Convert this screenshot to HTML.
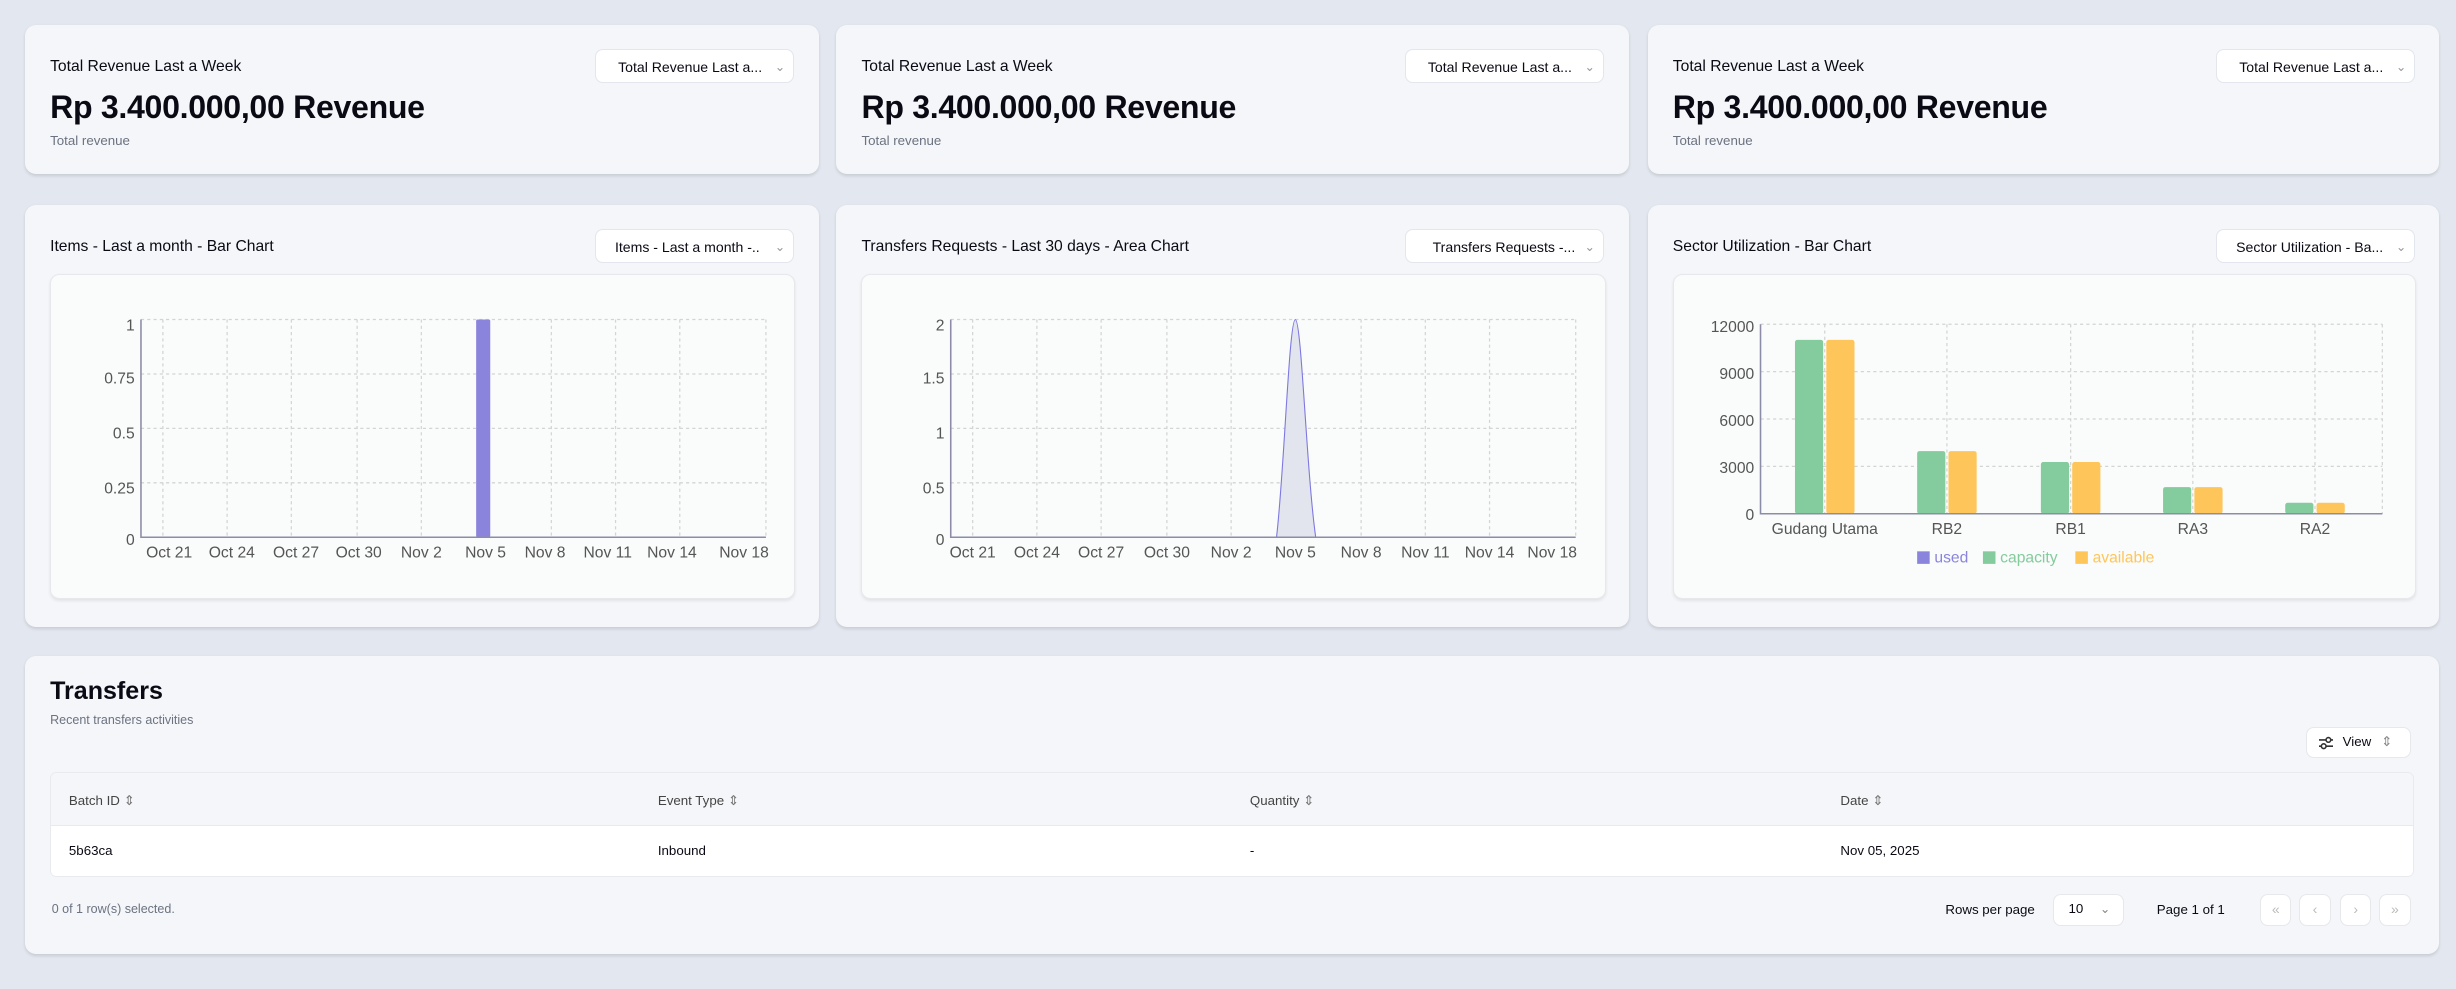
<!DOCTYPE html>
<html><head><meta charset="utf-8"><style>
html,body{margin:0;padding:0;background:#e3e7ef;}
body{width:1568px;height:631px;zoom:1.5663;overflow:hidden;font-family:"Liberation Sans",sans-serif;color:#0a0a14;position:relative}
.card{position:absolute;background:#f5f6f9;border-radius:7px;box-shadow:0 1px 2px rgba(0,0,0,.12)}
.t{position:absolute;font-size:10px;}
.big{position:absolute;font-size:20.5px;font-weight:bold;letter-spacing:-0.2px}
.sub{position:absolute;font-size:8.5px;color:#6b7280}
.sel{position:absolute;background:#fff;border:1px solid #e3e6ec;border-radius:5px;font-size:9px;height:22px;line-height:22px;box-sizing:border-box;padding-left:14px;white-space:nowrap}
.sel .c{position:absolute;right:5px;top:0;color:#999;font-size:8px}
.chart{position:absolute;background:#fafbfb;border:1px solid #e6e8ec;border-radius:6px;box-shadow:0 1px 2px rgba(0,0,0,.08)}
svg text{font-family:"Liberation Sans",sans-serif}
.sm{position:absolute;font-size:8.5px}
.btn{position:absolute;background:#fff;border:1px solid #e6e8ec;border-radius:5px;box-sizing:border-box}
</style></head><body>

<div class="card" style="left:16px;top:16px;width:507px;height:95px"></div>
<div class="card" style="left:534px;top:16px;width:506px;height:95px"></div>
<div class="card" style="left:1052px;top:16px;width:505px;height:95px"></div>

<div class="t" style="left:32px;top:37px">Total Revenue Last a Week</div>
<div class="big" style="left:32px;top:57px">Rp 3.400.000,00 Revenue</div>
<div class="sub" style="left:32px;top:85px">Total revenue</div>
<div class="sel" style="left:380px;top:31px;width:127px">Total Revenue Last a...<span class="c">⌄</span></div>

<div class="t" style="left:550px;top:37px">Total Revenue Last a Week</div>
<div class="big" style="left:550px;top:57px">Rp 3.400.000,00 Revenue</div>
<div class="sub" style="left:550px;top:85px">Total revenue</div>
<div class="sel" style="left:897px;top:31px;width:127px">Total Revenue Last a...<span class="c">⌄</span></div>

<div class="t" style="left:1068px;top:37px">Total Revenue Last a Week</div>
<div class="big" style="left:1068px;top:57px">Rp 3.400.000,00 Revenue</div>
<div class="sub" style="left:1068px;top:85px">Total revenue</div>
<div class="sel" style="left:1415px;top:31px;width:127px">Total Revenue Last a...<span class="c">⌄</span></div>

<div class="card" style="left:16px;top:131px;width:507px;height:269px"></div>
<div class="card" style="left:534px;top:131px;width:506px;height:269px"></div>
<div class="card" style="left:1052px;top:131px;width:505px;height:269px"></div>

<div class="t" style="left:32px;top:152px">Items - Last a month - Bar Chart</div>
<div class="sel" style="left:380px;top:146px;width:127px;padding-left:12px">Items - Last a month -..<span class="c">⌄</span></div>
<div class="t" style="left:550px;top:152px">Transfers Requests - Last 30 days - Area Chart</div>
<div class="sel" style="left:897px;top:146px;width:127px;padding-left:17px">Transfers Requests -...<span class="c">⌄</span></div>
<div class="t" style="left:1068px;top:152px">Sector Utilization - Bar Chart</div>
<div class="sel" style="left:1415px;top:146px;width:127px;padding-left:12px">Sector Utilization - Ba...<span class="c">⌄</span></div>

<div class="chart" style="left:32px;top:175px;width:474px;height:206px"></div>
<div class="chart" style="left:550px;top:175px;width:474px;height:206px"></div>
<div class="chart" style="left:1068px;top:175px;width:473px;height:206px"></div>

<svg width="1568" height="631" style="position:absolute;left:0;top:0" font-size="10" fill="#555">
<g stroke="#d4d4d4" stroke-dasharray="2,2" stroke-width="0.8" fill="none">
<path d="M90 204H489M90 238.75H489M90 273.5H489M90 308.25H489"/>
<path d="M104 204V343M145 204V343M186 204V343M228 204V343M269 204V343M310 204V343M352 204V343M393 204V343M434 204V343M489 204V343"/>
</g>
<rect x="304" y="204" width="9" height="139" rx="1" fill="#8a84dc"/>
<path d="M90 204V343H489" stroke="#8c8ca8" stroke-width="1" fill="none"/>
<g text-anchor="end" fill="#555"><text x="86" y="211">1</text><text x="86" y="245">0.75</text><text x="86" y="280">0.5</text><text x="86" y="315">0.25</text><text x="86" y="348">0</text></g>
<g text-anchor="middle"><text x="108" y="356">Oct 21</text><text x="148" y="356">Oct 24</text><text x="189" y="356">Oct 27</text><text x="229" y="356">Oct 30</text><text x="269" y="356">Nov 2</text><text x="310" y="356">Nov 5</text><text x="348" y="356">Nov 8</text><text x="388" y="356">Nov 11</text><text x="429" y="356">Nov 14</text><text x="475" y="356">Nov 18</text></g>

<g stroke="#d4d4d4" stroke-dasharray="2,2" stroke-width="0.8" fill="none">
<path d="M607 204H1006M607 238.75H1006M607 273.5H1006M607 308.25H1006"/>
<path d="M621 204V343M662 204V343M703 204V343M745 204V343M786 204V343M827 204V343M869 204V343M910 204V343M951 204V343M1006 204V343"/>
</g>
<path d="M815 343C820 300 823 204 827 204C831 204 834 300 840 343Z" fill="#e3e5ee" stroke="#7d78e0" stroke-width="0.7"/>
<path d="M607 204V343H1006" stroke="#8c8ca8" stroke-width="1" fill="none"/>
<g text-anchor="end"><text x="603" y="211">2</text><text x="603" y="245">1.5</text><text x="603" y="280">1</text><text x="603" y="315">0.5</text><text x="603" y="348">0</text></g>
<g text-anchor="middle"><text x="621" y="356">Oct 21</text><text x="662" y="356">Oct 24</text><text x="703" y="356">Oct 27</text><text x="745" y="356">Oct 30</text><text x="786" y="356">Nov 2</text><text x="827" y="356">Nov 5</text><text x="869" y="356">Nov 8</text><text x="910" y="356">Nov 11</text><text x="951" y="356">Nov 14</text><text x="991" y="356">Nov 18</text></g>

<g stroke="#d4d4d4" stroke-dasharray="2,2" stroke-width="0.8" fill="none">
<path d="M1124 207H1521M1124 237.25H1521M1124 267.5H1521M1124 297.75H1521"/>
<path d="M1165 207V328M1243 207V328M1322 207V328M1400 207V328M1478 207V328M1521 207V328"/>
</g>
<g fill="#84cb9d"><rect x="1146" y="217" width="18" height="111" rx="1.5"/><rect x="1224" y="288" width="18" height="40" rx="1.5"/><rect x="1303" y="295" width="18" height="33" rx="1.5"/><rect x="1381" y="311" width="18" height="17" rx="1.5"/><rect x="1459" y="321" width="18" height="7" rx="1.5"/></g>
<g fill="#fec65a"><rect x="1166" y="217" width="18" height="111" rx="1.5"/><rect x="1244" y="288" width="18" height="40" rx="1.5"/><rect x="1323" y="295" width="18" height="33" rx="1.5"/><rect x="1401" y="311" width="18" height="17" rx="1.5"/><rect x="1479" y="321" width="18" height="7" rx="1.5"/></g>
<path d="M1124 207V328H1521" stroke="#8c8ca8" stroke-width="1" fill="none"/>
<g text-anchor="end"><text x="1120" y="212">12000</text><text x="1120" y="242">9000</text><text x="1120" y="272">6000</text><text x="1120" y="302">3000</text><text x="1120" y="332">0</text></g>
<g text-anchor="middle"><text x="1165" y="341">Gudang Utama</text><text x="1243" y="341">RB2</text><text x="1322" y="341">RB1</text><text x="1400" y="341">RA3</text><text x="1478" y="341">RA2</text></g>
<rect x="1224" y="352" width="8" height="8" fill="#8a84dc"/><text x="1235" y="359" fill="#8a84dc">used</text>
<rect x="1266" y="352" width="8" height="8" fill="#84cb9d"/><text x="1277" y="359" fill="#84cb9d">capacity</text>
<rect x="1325" y="352" width="8" height="8" fill="#fec65a"/><text x="1336" y="359" fill="#fec65a">available</text>
</svg>

<div class="card" style="left:16px;top:419px;width:1541px;height:190px"></div>
<div style="position:absolute;left:32px;top:432px;font-size:16px;font-weight:bold">Transfers</div>
<div class="sub" style="left:32px;top:455px;font-size:8px">Recent transfers activities</div>
<div class="btn" style="left:1472px;top:464px;width:67px;height:20px;font-size:8.5px;line-height:18px;padding-left:23px">View <span style="color:#888;margin-left:4px">⇕</span>
<svg width="9" height="9" style="position:absolute;left:8px;top:5px" stroke="#333" stroke-width="1" fill="none"><path d="M0 2.5H9M0 6.5H9"/><circle cx="6" cy="2.5" r="1.5" fill="#fff"/><circle cx="3" cy="6.5" r="1.5" fill="#fff"/></svg></div>

<div style="position:absolute;left:32px;top:493px;width:1509px;height:67px;border:1px solid #e8eaee;border-radius:4px;box-sizing:border-box;overflow:hidden">
<div style="height:33px;background:#f5f6f9;border-bottom:1px solid #e8eaee"></div>
<div style="height:33px;background:#fff"></div>
</div>
<div class="sm" style="left:44px;top:506px;color:#444">Batch ID <span style="color:#777">⇕</span></div>
<div class="sm" style="left:420px;top:506px;color:#444">Event Type <span style="color:#777">⇕</span></div>
<div class="sm" style="left:798px;top:506px;color:#444">Quantity <span style="color:#777">⇕</span></div>
<div class="sm" style="left:1175px;top:506px;color:#444">Date <span style="color:#777">⇕</span></div>
<div class="sm" style="left:44px;top:538px">5b63ca</div>
<div class="sm" style="left:420px;top:538px">Inbound</div>
<div class="sm" style="left:798px;top:538px">-</div>
<div class="sm" style="left:1175px;top:538px">Nov 05, 2025</div>

<div class="sm" style="left:33px;top:576px;color:#6b7280;font-size:8px">0 of 1 row(s) selected.</div>
<div class="sm" style="left:1242px;top:576px">Rows per page</div>
<div class="btn" style="left:1311px;top:571px;width:45px;height:20px;font-size:8.5px;line-height:18px;padding-left:9px">10<span style="position:absolute;right:8px;color:#888;font-size:8px">⌄</span></div>
<div class="sm" style="left:1377px;top:576px">Page 1 of 1</div>
<div class="btn" style="left:1443px;top:571px;width:20px;height:20px;font-size:9px;text-align:center;line-height:18px;color:#bbb">«</div>
<div class="btn" style="left:1468px;top:571px;width:20px;height:20px;font-size:9px;text-align:center;line-height:18px;color:#bbb">‹</div>
<div class="btn" style="left:1494px;top:571px;width:20px;height:20px;font-size:9px;text-align:center;line-height:18px;color:#bbb">›</div>
<div class="btn" style="left:1519px;top:571px;width:20px;height:20px;font-size:9px;text-align:center;line-height:18px;color:#bbb">»</div>
</body></html>
